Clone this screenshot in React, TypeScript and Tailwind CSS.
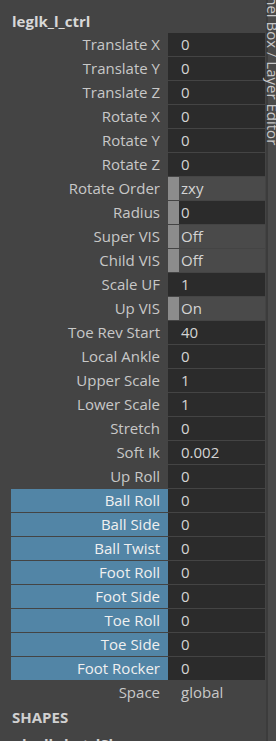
import React from "react";

type Row = {
  label: string;
  value: string;
  kind?: "field" | "enum" | "enumField" | "plain";
  keyed?: boolean;
};

const rows: Row[] = [
  { label: "Translate X", value: "0" },
  { label: "Translate Y", value: "0" },
  { label: "Translate Z", value: "0" },
  { label: "Rotate X", value: "0" },
  { label: "Rotate Y", value: "0" },
  { label: "Rotate Z", value: "0" },
  { label: "Rotate Order", value: "zxy", kind: "enum" },
  { label: "Radius", value: "0", kind: "enumField" },
  { label: "Super VIS", value: "Off", kind: "enum" },
  { label: "Child VIS", value: "Off", kind: "enum" },
  { label: "Scale UF", value: "1" },
  { label: "Up VIS", value: "On", kind: "enum" },
  { label: "Toe Rev Start", value: "40" },
  { label: "Local Ankle", value: "0" },
  { label: "Upper Scale", value: "1" },
  { label: "Lower Scale", value: "1" },
  { label: "Stretch", value: "0" },
  { label: "Soft Ik", value: "0.002" },
  { label: "Up Roll", value: "0" },
  { label: "Ball Roll", value: "0", keyed: true },
  { label: "Ball Side", value: "0", keyed: true },
  { label: "Ball Twist", value: "0", keyed: true },
  { label: "Foot Roll", value: "0", keyed: true },
  { label: "Foot Side", value: "0", keyed: true },
  { label: "Toe Roll", value: "0", keyed: true },
  { label: "Toe Side", value: "0", keyed: true },
  { label: "Foot Rocker", value: "0", keyed: true },
  { label: "Space", value: "global", kind: "plain" },
];

function ChannelRow({ row }: { row: Row }) {
  const kind = row.kind ?? "field";
  return (
    <div className="flex h-[24px]">
      {row.keyed ? (
        <div className="ml-[11px] flex h-[23px] w-[157px] items-center justify-end bg-[#5285a6] pr-[8px] text-[#f0f0f0]">
          {row.label}
        </div>
      ) : (
        <div className="flex h-[23px] w-[168px] items-center justify-end pr-[8px] text-[#c8c8c8]">
          {row.label}
        </div>
      )}
      {kind === "field" && (
        <div className="flex h-[23px] w-[97px] items-center bg-[#2b2b2b] pl-[13px] text-[#d4d4d4]">
          {row.value}
        </div>
      )}
      {kind === "enum" && (
        <div className="flex h-[23px] w-[97px] bg-[#4a4a4a]">
          <div className="w-[11px] bg-[#8c8c8c]" />
          <div className="flex items-center pl-[2px] text-[#d4d4d4]">{row.value}</div>
        </div>
      )}
      {kind === "enumField" && (
        <div className="flex h-[23px] w-[97px] bg-[#2b2b2b]">
          <div className="w-[11px] bg-[#8c8c8c]" />
          <div className="flex items-center pl-[2px] text-[#d4d4d4]">{row.value}</div>
        </div>
      )}
      {kind === "plain" && (
        <div className="flex h-[23px] w-[97px] items-center pl-[13px] text-[#c8c8c8]">
          {row.value}
        </div>
      )}
    </div>
  );
}

export default function App() {
  return (
    <div
      className="flex h-[741px] w-[276px] overflow-hidden bg-[#444444] text-[15px] leading-none"
      style={{ fontFamily: '"Open Sans", "Noto Sans", sans-serif' }}
    >
      <div className="w-[266px] shrink-0">
        <div className="flex h-[33px] items-end pb-[4px] pl-[12px] font-bold text-[#d8d8d8]">
          leglk_l_ctrl
        </div>
        {rows.map((r) => (
          <ChannelRow key={r.label} row={r} />
        ))}
        <div className="flex h-[24px] items-center pl-[12px] font-bold text-[#d0d0d0]">
          SHAPES
        </div>
        <div className="flex h-[20px] items-center pl-[22px] pt-[10px] font-bold text-[#d0d0d0]">
          leglk_l_ctrlShape
        </div>
      </div>
      <div className="w-[2px] shrink-0 bg-[#3c3c3c]" />
      <div className="relative w-[8px] shrink-0 bg-[#4a4a4a]">
        <div
          className="absolute left-[-3px] top-[-40px] whitespace-nowrap text-[15px] text-[#c8c8c8]"
          style={{ writingMode: "vertical-rl" }}
        >
          Channel Box / Layer Editor
        </div>
      </div>
    </div>
  );
}
